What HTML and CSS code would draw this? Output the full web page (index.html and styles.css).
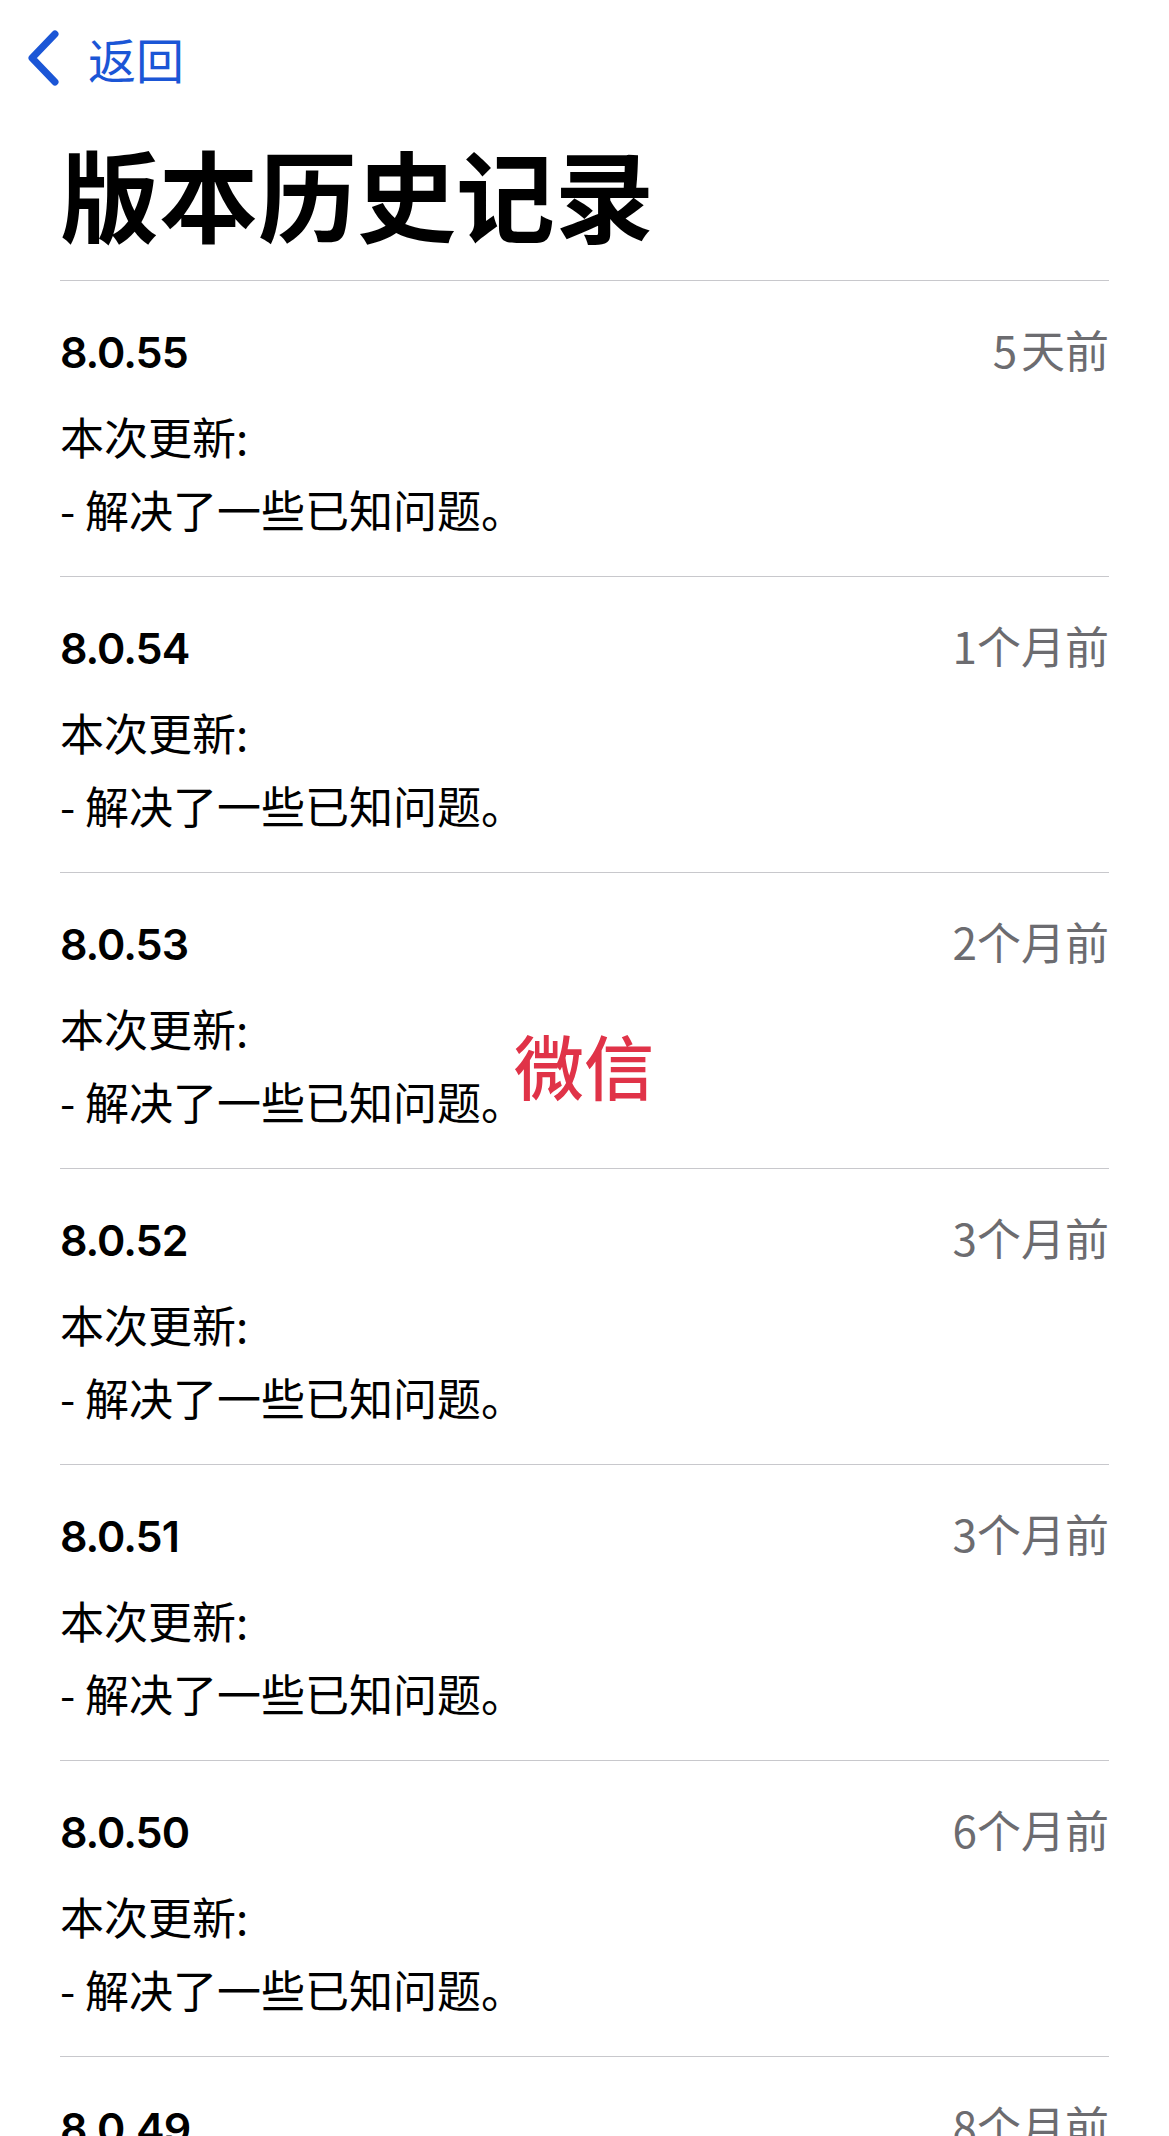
FILE: index.html
```html
<!DOCTYPE html>
<html lang="zh-CN">
<head>
<meta charset="utf-8">
<title>版本历史记录</title>
<link rel="stylesheet" href="styles.css">
</head>
<body>
<div class="page">
  <header class="nav">
    <a class="back" href="#">
      <svg class="chev" width="34" height="56" viewBox="0 0 34 56" aria-hidden="true">
        <path d="M29 4 L6 28 L29 52" fill="none" stroke="#1b56d6" stroke-width="7" stroke-linecap="round" stroke-linejoin="round"/>
      </svg>
      <span class="back-label">返回</span>
    </a>
  </header>
  <h1 class="title">版本历史记录</h1>
  <ul class="list">
    <li class="entry">
      <div class="head"><span class="ver">8.0.55</span><span class="when">5 天前</span></div>
      <p class="notes">本次更新:</p>
      <p class="notes">- 解决了一些已知问题。</p>
    </li>
    <li class="entry">
      <div class="head"><span class="ver">8.0.54</span><span class="when">1个月前</span></div>
      <p class="notes">本次更新:</p>
      <p class="notes">- 解决了一些已知问题。</p>
    </li>
    <li class="entry mark-host">
      <div class="head"><span class="ver">8.0.53</span><span class="when">2个月前</span></div>
      <p class="notes">本次更新:</p>
      <p class="notes">- 解决了一些已知问题。</p>
      <span class="stamp">微信</span>
    </li>
    <li class="entry">
      <div class="head"><span class="ver">8.0.52</span><span class="when">3个月前</span></div>
      <p class="notes">本次更新:</p>
      <p class="notes">- 解决了一些已知问题。</p>
    </li>
    <li class="entry">
      <div class="head"><span class="ver">8.0.51</span><span class="when">3个月前</span></div>
      <p class="notes">本次更新:</p>
      <p class="notes">- 解决了一些已知问题。</p>
    </li>
    <li class="entry">
      <div class="head"><span class="ver">8.0.50</span><span class="when">6个月前</span></div>
      <p class="notes">本次更新:</p>
      <p class="notes">- 解决了一些已知问题。</p>
    </li>
    <li class="entry">
      <div class="head"><span class="ver">8.0.49</span><span class="when">8个月前</span></div>
      <p class="notes">本次更新:</p>
      <p class="notes">- 解决了一些已知问题。</p>
    </li>
  </ul>
</div>
</body>
</html>
```

FILE: styles.css
```css
html, body {
  margin: 0;
  padding: 0;
  background: #ffffff;
}
body {
  font-family: "Noto Sans CJK SC", "Noto Sans", sans-serif;
  color: #000;
  overflow: hidden;
}
.page {
  padding: 0 60px;
}
.nav {
  display: flex;
  align-items: center;
  height: 84px;
  padding-top: 16px;
  margin-left: -34px;
}
.back {
  display: flex;
  align-items: center;
  gap: 28px;
  text-decoration: none;
  color: #1b56d6;
}
.chev {
  display: block;
}
.back-label {
  font-size: 48px;
  line-height: 56px;
}
.title {
  margin: 34px 0 0;
  font-size: 99px;
  line-height: 117px;
  font-weight: 700;
  letter-spacing: 0;
  padding-bottom: 29px;
}
.list {
  list-style: none;
  margin: 0;
  padding: 0;
}
.entry {
  border-top: 1px solid #c8c8cc;
  padding: 42px 0 30px;
}
.mark-host {
  position: relative;
}
.head {
  display: flex;
  justify-content: space-between;
  align-items: baseline;
  height: 52px;
  margin-bottom: 25px;
}
.ver {
  font-family: Inter, "Noto Sans", sans-serif;
  font-weight: 600;
  font-size: 43px;
  line-height: 52px;
  letter-spacing: -1px;
}
.when {
  font-size: 44px;
  line-height: 52px;
  color: #6c6c70;
  word-spacing: -6px;
}
.notes {
  margin: 0;
  font-size: 44px;
  line-height: 73px;
}
.stamp {
  position: absolute;
  left: 454px;
  top: 152px;
  font-size: 70px;
  line-height: 80px;
  color: #e03348;
  font-weight: 500;
}
```
